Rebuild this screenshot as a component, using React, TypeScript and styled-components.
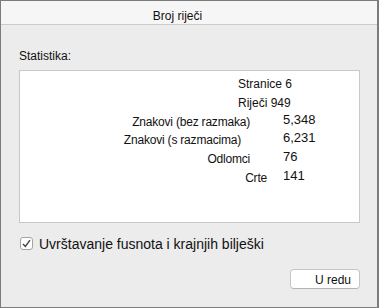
import { FunctionComponent, Fragment } from "react";
import styled, { createGlobalStyle } from "styled-components";

const GlobalStyle = createGlobalStyle`
  html, body {
    margin: 0;
    padding: 0;
    background: #ececec;
  }
  body {
    font-family: "Liberation Sans", Arial, sans-serif;
    color: #111;
  }
`;

const Window = styled.div`
  width: 379px;
  height: 308px;
  box-sizing: border-box;
  border: 1px solid #7c7c7c;
  border-right-width: 2px;
  background-color: #ececec;
  display: flex;
  flex-direction: column;
`;
const TitleBar = styled.div`
  height: 24px;
  box-sizing: border-box;
  padding: 8px 23px 0 0;
  background-color: #f6f6f6;
  border-bottom: 1px solid #cacaca;
  text-align: center;
  font-size: 12px;
  line-height: 14px;
`;
const Body = styled.div`
  display: flex;
  flex-direction: column;
  padding: 24px 17px 0 18px;
`;
const SectionLabel = styled.div`
  font-size: 12px;
  line-height: 14px;
  margin-bottom: 7px;
`;
const StatsBox = styled.div`
  height: 153px;
  box-sizing: border-box;
  border: 1px solid #c8c8c8;
  background-color: #ffffff;
  padding-top: 4px;
  display: grid;
  grid-template-columns: 262px 1fr;
  grid-auto-rows: 18.8px;
  align-content: start;
  font-size: 12px;
`;
const FullRow = styled.div`
  grid-column: 1 / -1;
  padding-left: 218px;
  line-height: 18.8px;
  white-space: nowrap;
`;
const StatLabel = styled.div<{ $pad: number }>`
  text-align: right;
  padding-right: ${(p) => p.$pad}px;
  line-height: 18.8px;
  white-space: nowrap;
  letter-spacing: -0.2px;
`;
const StatValue = styled.div`
  font-size: 13px;
  line-height: 14.8px;
  padding: 0 0 4px 1px;
  white-space: nowrap;
`;
const CheckRow = styled.label`
  margin-top: 12px;
  height: 17px;
  display: flex;
  align-items: center;
  gap: 6px;
  padding-left: 1px;
  font-size: 14px;
  line-height: 17px;
`;
const CheckBox = styled.span`
  width: 13px;
  height: 13px;
  box-sizing: border-box;
  border: 1px solid #a4a4a4;
  border-radius: 3px;
  background-color: #ffffff;
  display: flex;
  align-items: center;
  justify-content: center;
`;
const CheckText = styled.span`
  padding-top: 2px;
`;
const ButtonRow = styled.div`
  margin-top: 17px;
  display: flex;
  justify-content: flex-end;
`;
const Button = styled.button`
  width: 70px;
  height: 20px;
  box-sizing: border-box;
  border: 1px solid #c6c6c6;
  border-bottom-color: #b4b4b4;
  border-radius: 4px;
  background-color: #ffffff;
  font-family: inherit;
  font-size: 12px;
  color: #111;
  display: flex;
  align-items: center;
  justify-content: flex-end;
  padding: 2px 8px 0 0;
`;

type Stat = { label: string; value: string; pad: number };

const stats: Stat[] = [
  { label: "Znakovi (bez razmaka)", value: "5,348", pad: 32 },
  { label: "Znakovi (s razmacima)", value: "6,231", pad: 41 },
  { label: "Odlomci", value: "76", pad: 32 },
  { label: "Crte", value: "141", pad: 15 },
];

const App: FunctionComponent = () => {
  return (
    <>
      <GlobalStyle />
      <Window>
        <TitleBar>Broj riječi</TitleBar>
        <Body>
          <SectionLabel>Statistika:</SectionLabel>
          <StatsBox>
            <FullRow>Stranice 6</FullRow>
            <FullRow>Riječi 949</FullRow>
            {stats.map((s) => (
              <Fragment key={s.label}>
                <StatLabel $pad={s.pad}>{s.label}</StatLabel>
                <StatValue>{s.value}</StatValue>
              </Fragment>
            ))}
          </StatsBox>
          <CheckRow>
            <CheckBox>
              <svg width="9" height="9" viewBox="0 0 9 9">
                <path
                  d="M1 5 L3.4 7.4 L8 1.2"
                  fill="none"
                  stroke="#3c3c3c"
                  strokeWidth="1.3"
                />
              </svg>
            </CheckBox>
            <CheckText>Uvrštavanje fusnota i krajnjih bilješki</CheckText>
          </CheckRow>
          <ButtonRow>
            <Button>U redu</Button>
          </ButtonRow>
        </Body>
      </Window>
    </>
  );
};

export default App;
